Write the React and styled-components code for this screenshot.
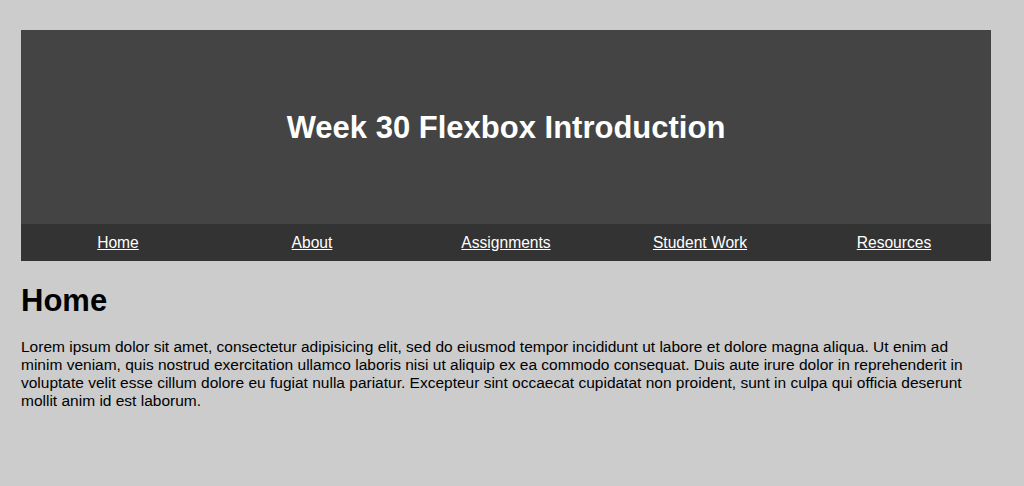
import React from 'react'
import styled, { createGlobalStyle } from 'styled-components'

const GlobalStyle = createGlobalStyle`
  html, body {
    margin: 0;
    padding: 0;
    background: #cccccc;
  }
  body {
    font-family: Arial, "Liberation Sans", sans-serif;
    color: #000;
  }
`

const Page = styled.div`
  width: 970px;
  padding: 30px 0 0 21px;
`

const Header = styled.header`
  display: flex;
  flex-direction: column;
  background: #444444;
`

const TitleBar = styled.div`
  display: flex;
  align-items: center;
  justify-content: center;
  height: 194px;
  padding-top: 2px;
  box-sizing: border-box;
`

const Title = styled.h1`
  margin: 0;
  color: #fff;
  font-size: 31px;
  font-weight: bold;
`

const Nav = styled.nav`
  display: flex;
  background: #333333;
  height: 37px;
  align-items: center;
`

const NavLink = styled.a`
  flex: 1;
  text-align: center;
  color: #fff;
  font-size: 15.6px;
  text-decoration: underline;
`

const Main = styled.main`
  h1 {
    font-size: 31px;
    line-height: 37px;
    margin: 21px 0 19px;
  }
  p {
    font-size: 15.5px;
    margin: 0;
    line-height: 18px;
  }
`

const links = ['Home', 'About', 'Assignments', 'Student Work', 'Resources']

export default function App() {
  return (
    <>
      <GlobalStyle />
      <Page>
        <Header>
          <TitleBar>
            <Title>Week 30 Flexbox Introduction</Title>
          </TitleBar>
          <Nav>
            {links.map((l) => (
              <NavLink key={l} href="#">{l}</NavLink>
            ))}
          </Nav>
        </Header>
        <Main>
          <h1>Home</h1>
          <p>
            Lorem ipsum dolor sit amet, consectetur adipisicing elit, sed do eiusmod tempor incididunt ut labore et dolore magna aliqua. Ut enim ad minim veniam, quis nostrud exercitation ullamco laboris nisi ut aliquip ex ea commodo consequat. Duis aute irure dolor in reprehenderit in voluptate velit esse cillum dolore eu fugiat nulla pariatur. Excepteur sint occaecat cupidatat non proident, sunt in culpa qui officia deserunt mollit anim id est laborum.
          </p>
        </Main>
      </Page>
    </>
  )
}
